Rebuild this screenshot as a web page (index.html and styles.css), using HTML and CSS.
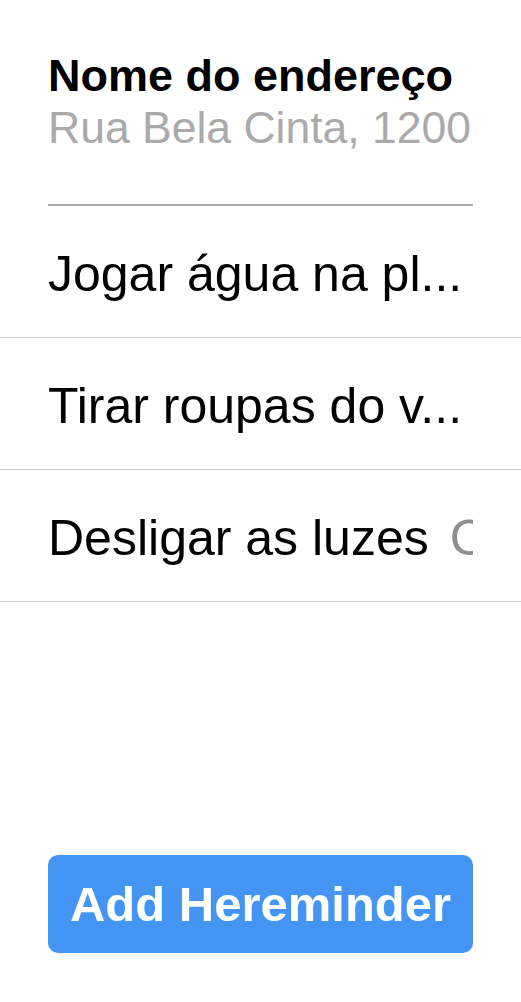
FILE: index.html
```html
<!DOCTYPE html>
<html lang="pt">
<head>
<meta charset="utf-8">
<title>Hereminder</title>
<link rel="stylesheet" href="styles.css">
</head>
<body>
<div class="page">
  <header class="place">
    <div class="place-name">Nome do endereço</div>
    <div class="place-address">Rua Bela Cinta, 1200</div>
  </header>
  <ul class="list">
    <li class="row"><div class="row-inner"><span class="row-title">Jogar água na pl...</span></div></li>
    <li class="row"><div class="row-inner"><span class="row-title">Tirar roupas do v...</span></div></li>
    <li class="row"><div class="row-inner"><span class="row-title">Desligar as luzes</span><span class="row-sub">Casa</span></div></li>
  </ul>
  <div class="actions">
    <button class="add-btn">Add Hereminder</button>
  </div>
</div>
</body>
</html>
```

FILE: styles.css
```css
* { box-sizing: border-box; }
html, body { margin: 0; padding: 0; background: #fff; }
body { font-family: "Liberation Sans", Arial, sans-serif; color: #000; }

.page {
  display: flex;
  flex-direction: column;
  min-height: 100vh;
}

.place {
  padding: 50px 48px 0 48px;
}
.place-name {
  font-size: 45px;
  line-height: 52px;
  font-weight: 700;
  white-space: nowrap;
}
.place-address {
  font-size: 44.5px;
  line-height: 52px;
  color: #aaaaaa;
  white-space: nowrap;
  padding-bottom: 50px;
  border-bottom: 2px solid #adadad;
}

.list {
  list-style: none;
  margin: 0;
  padding: 0;
}
.row {
  height: 132px;
  border-bottom: 1px solid #cfcfd2;
  display: flex;
  align-items: center;
  padding: 4px 48px 0 48px;
}
.row-inner {
  display: flex;
  width: 100%;
  overflow: hidden;
  font-size: 50px;
  line-height: 60px;
  white-space: nowrap;
}
.row-title {
  flex: 0 0 auto;
}
.row-sub {
  flex: 0 0 auto;
  margin-left: 21px;
  color: #8e8e93;
}

.actions {
  margin-top: auto;
  padding: 0 48px 49px 48px;
}
.add-btn {
  display: block;
  width: 100%;
  height: 98px;
  border: none;
  border-radius: 10px;
  background: #4394f3;
  color: #fff;
  font-family: "Liberation Sans", Arial, sans-serif;
  font-size: 49px;
  font-weight: 700;
  padding: 0;
}
```
